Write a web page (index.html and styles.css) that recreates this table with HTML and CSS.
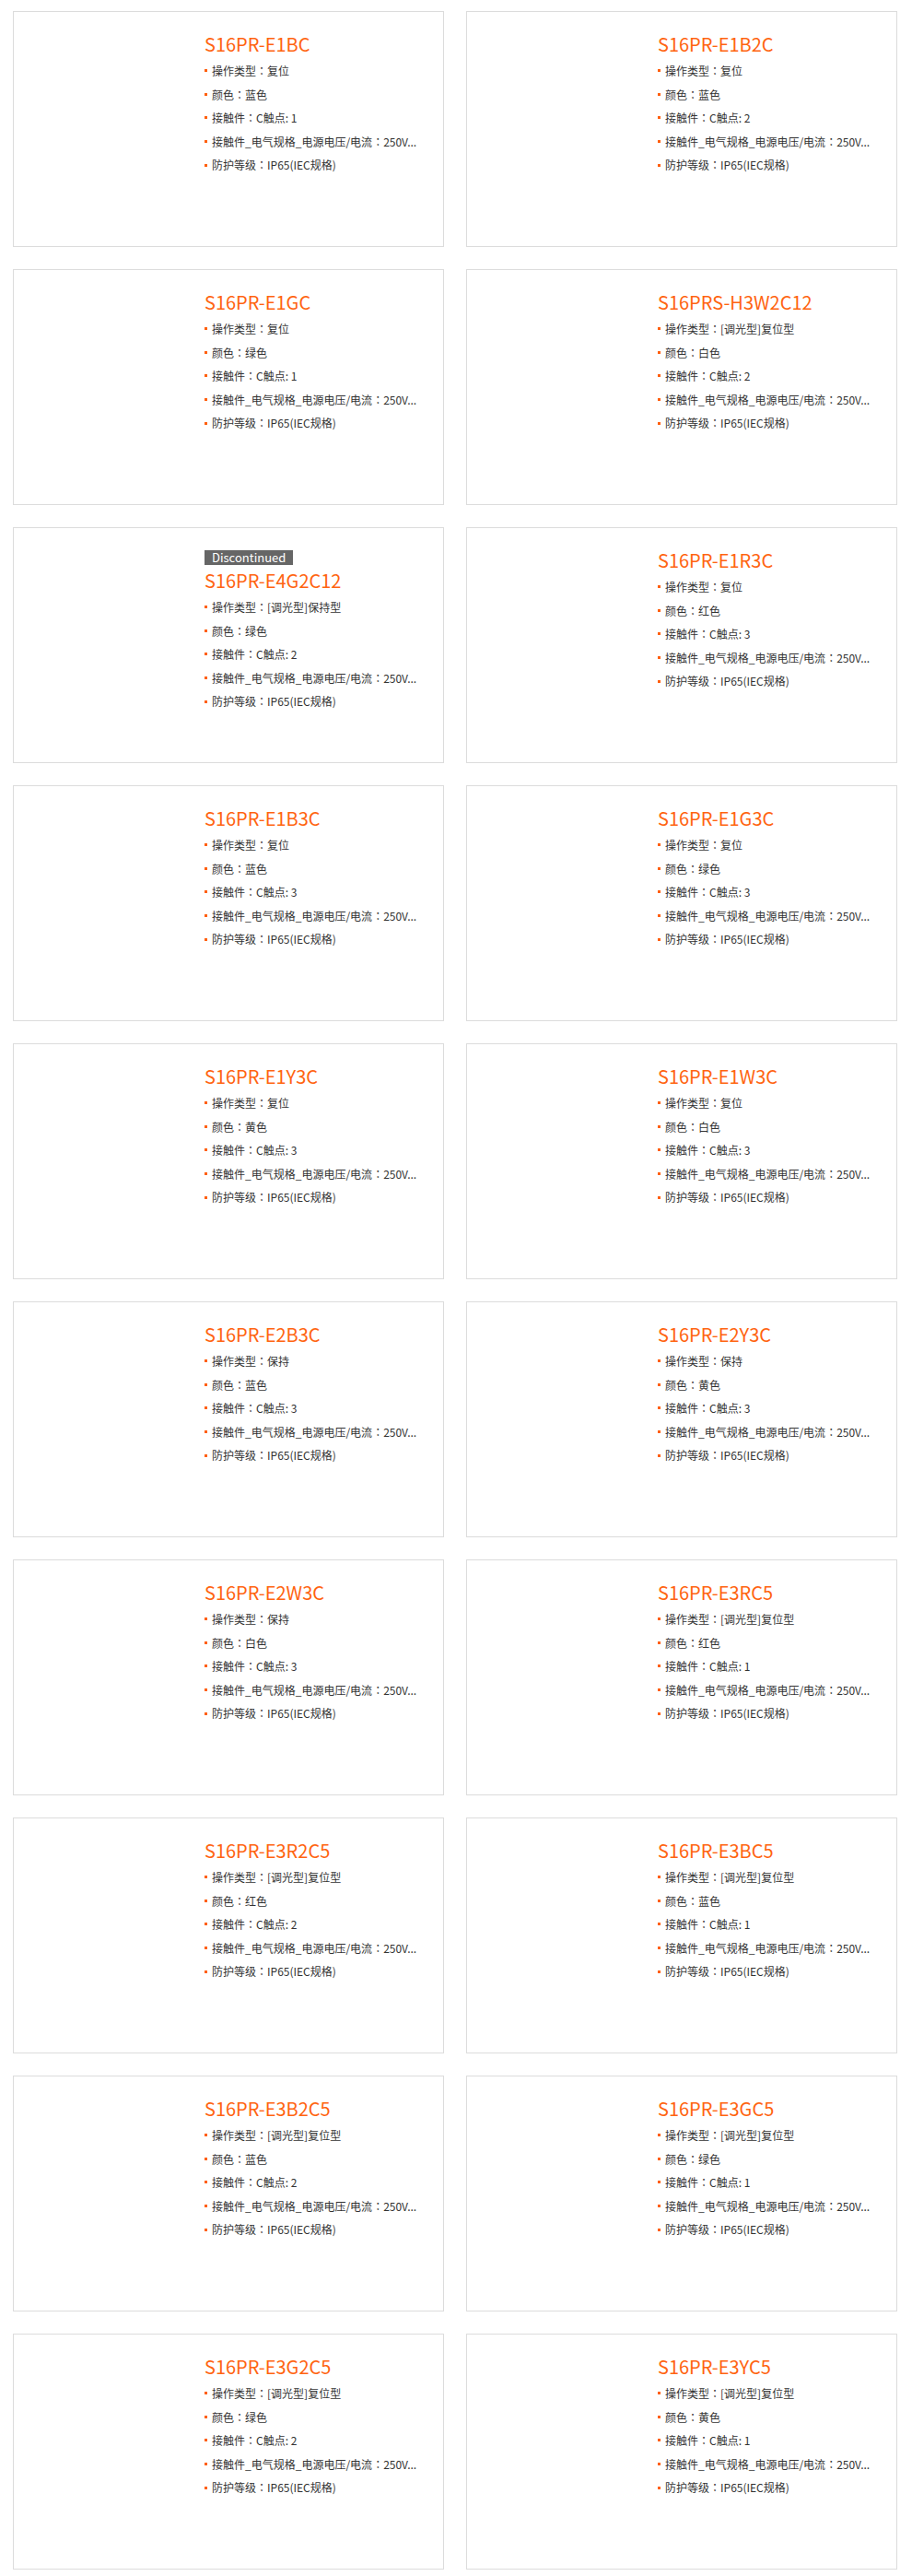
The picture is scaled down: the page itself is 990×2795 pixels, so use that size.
FILE: index.html
```html
<!DOCTYPE html>
<html lang="zh-CN">
<head>
<meta charset="utf-8">
<title>S16 系列</title>
<link rel="stylesheet" href="styles.css">
</head>
<body>
<div class="grid">

  <div class="card">
    <h3 class="title">S16PR-E1BC</h3>
    <ul class="specs">
      <li>操作类型<span class="sep">：</span>复位</li>
      <li>颜色<span class="sep">：</span>蓝色</li>
      <li>接触件<span class="sep">：</span>C触点: 1</li>
      <li>接触件_电气规格_电源电压/电流<span class="sep">：</span>250V...</li>
      <li>防护等级<span class="sep">：</span>IP65(IEC规格)</li>
    </ul>
  </div>
  <div class="card">
    <h3 class="title">S16PR-E1B2C</h3>
    <ul class="specs">
      <li>操作类型<span class="sep">：</span>复位</li>
      <li>颜色<span class="sep">：</span>蓝色</li>
      <li>接触件<span class="sep">：</span>C触点: 2</li>
      <li>接触件_电气规格_电源电压/电流<span class="sep">：</span>250V...</li>
      <li>防护等级<span class="sep">：</span>IP65(IEC规格)</li>
    </ul>
  </div>

  <div class="card">
    <h3 class="title">S16PR-E1GC</h3>
    <ul class="specs">
      <li>操作类型<span class="sep">：</span>复位</li>
      <li>颜色<span class="sep">：</span>绿色</li>
      <li>接触件<span class="sep">：</span>C触点: 1</li>
      <li>接触件_电气规格_电源电压/电流<span class="sep">：</span>250V...</li>
      <li>防护等级<span class="sep">：</span>IP65(IEC规格)</li>
    </ul>
  </div>
  <div class="card">
    <h3 class="title">S16PRS-H3W2C12</h3>
    <ul class="specs">
      <li>操作类型<span class="sep">：</span>[调光型]复位型</li>
      <li>颜色<span class="sep">：</span>白色</li>
      <li>接触件<span class="sep">：</span>C触点: 2</li>
      <li>接触件_电气规格_电源电压/电流<span class="sep">：</span>250V...</li>
      <li>防护等级<span class="sep">：</span>IP65(IEC规格)</li>
    </ul>
  </div>

  <div class="card">
    <span class="badge">Discontinued</span>
    <h3 class="title">S16PR-E4G2C12</h3>
    <ul class="specs">
      <li>操作类型<span class="sep">：</span>[调光型]保持型</li>
      <li>颜色<span class="sep">：</span>绿色</li>
      <li>接触件<span class="sep">：</span>C触点: 2</li>
      <li>接触件_电气规格_电源电压/电流<span class="sep">：</span>250V...</li>
      <li>防护等级<span class="sep">：</span>IP65(IEC规格)</li>
    </ul>
  </div>
  <div class="card">
    <h3 class="title">S16PR-E1R3C</h3>
    <ul class="specs">
      <li>操作类型<span class="sep">：</span>复位</li>
      <li>颜色<span class="sep">：</span>红色</li>
      <li>接触件<span class="sep">：</span>C触点: 3</li>
      <li>接触件_电气规格_电源电压/电流<span class="sep">：</span>250V...</li>
      <li>防护等级<span class="sep">：</span>IP65(IEC规格)</li>
    </ul>
  </div>

  <div class="card">
    <h3 class="title">S16PR-E1B3C</h3>
    <ul class="specs">
      <li>操作类型<span class="sep">：</span>复位</li>
      <li>颜色<span class="sep">：</span>蓝色</li>
      <li>接触件<span class="sep">：</span>C触点: 3</li>
      <li>接触件_电气规格_电源电压/电流<span class="sep">：</span>250V...</li>
      <li>防护等级<span class="sep">：</span>IP65(IEC规格)</li>
    </ul>
  </div>
  <div class="card">
    <h3 class="title">S16PR-E1G3C</h3>
    <ul class="specs">
      <li>操作类型<span class="sep">：</span>复位</li>
      <li>颜色<span class="sep">：</span>绿色</li>
      <li>接触件<span class="sep">：</span>C触点: 3</li>
      <li>接触件_电气规格_电源电压/电流<span class="sep">：</span>250V...</li>
      <li>防护等级<span class="sep">：</span>IP65(IEC规格)</li>
    </ul>
  </div>

  <div class="card">
    <h3 class="title">S16PR-E1Y3C</h3>
    <ul class="specs">
      <li>操作类型<span class="sep">：</span>复位</li>
      <li>颜色<span class="sep">：</span>黄色</li>
      <li>接触件<span class="sep">：</span>C触点: 3</li>
      <li>接触件_电气规格_电源电压/电流<span class="sep">：</span>250V...</li>
      <li>防护等级<span class="sep">：</span>IP65(IEC规格)</li>
    </ul>
  </div>
  <div class="card">
    <h3 class="title">S16PR-E1W3C</h3>
    <ul class="specs">
      <li>操作类型<span class="sep">：</span>复位</li>
      <li>颜色<span class="sep">：</span>白色</li>
      <li>接触件<span class="sep">：</span>C触点: 3</li>
      <li>接触件_电气规格_电源电压/电流<span class="sep">：</span>250V...</li>
      <li>防护等级<span class="sep">：</span>IP65(IEC规格)</li>
    </ul>
  </div>

  <div class="card">
    <h3 class="title">S16PR-E2B3C</h3>
    <ul class="specs">
      <li>操作类型<span class="sep">：</span>保持</li>
      <li>颜色<span class="sep">：</span>蓝色</li>
      <li>接触件<span class="sep">：</span>C触点: 3</li>
      <li>接触件_电气规格_电源电压/电流<span class="sep">：</span>250V...</li>
      <li>防护等级<span class="sep">：</span>IP65(IEC规格)</li>
    </ul>
  </div>
  <div class="card">
    <h3 class="title">S16PR-E2Y3C</h3>
    <ul class="specs">
      <li>操作类型<span class="sep">：</span>保持</li>
      <li>颜色<span class="sep">：</span>黄色</li>
      <li>接触件<span class="sep">：</span>C触点: 3</li>
      <li>接触件_电气规格_电源电压/电流<span class="sep">：</span>250V...</li>
      <li>防护等级<span class="sep">：</span>IP65(IEC规格)</li>
    </ul>
  </div>

  <div class="card">
    <h3 class="title">S16PR-E2W3C</h3>
    <ul class="specs">
      <li>操作类型<span class="sep">：</span>保持</li>
      <li>颜色<span class="sep">：</span>白色</li>
      <li>接触件<span class="sep">：</span>C触点: 3</li>
      <li>接触件_电气规格_电源电压/电流<span class="sep">：</span>250V...</li>
      <li>防护等级<span class="sep">：</span>IP65(IEC规格)</li>
    </ul>
  </div>
  <div class="card">
    <h3 class="title">S16PR-E3RC5</h3>
    <ul class="specs">
      <li>操作类型<span class="sep">：</span>[调光型]复位型</li>
      <li>颜色<span class="sep">：</span>红色</li>
      <li>接触件<span class="sep">：</span>C触点: 1</li>
      <li>接触件_电气规格_电源电压/电流<span class="sep">：</span>250V...</li>
      <li>防护等级<span class="sep">：</span>IP65(IEC规格)</li>
    </ul>
  </div>

  <div class="card">
    <h3 class="title">S16PR-E3R2C5</h3>
    <ul class="specs">
      <li>操作类型<span class="sep">：</span>[调光型]复位型</li>
      <li>颜色<span class="sep">：</span>红色</li>
      <li>接触件<span class="sep">：</span>C触点: 2</li>
      <li>接触件_电气规格_电源电压/电流<span class="sep">：</span>250V...</li>
      <li>防护等级<span class="sep">：</span>IP65(IEC规格)</li>
    </ul>
  </div>
  <div class="card">
    <h3 class="title">S16PR-E3BC5</h3>
    <ul class="specs">
      <li>操作类型<span class="sep">：</span>[调光型]复位型</li>
      <li>颜色<span class="sep">：</span>蓝色</li>
      <li>接触件<span class="sep">：</span>C触点: 1</li>
      <li>接触件_电气规格_电源电压/电流<span class="sep">：</span>250V...</li>
      <li>防护等级<span class="sep">：</span>IP65(IEC规格)</li>
    </ul>
  </div>

  <div class="card">
    <h3 class="title">S16PR-E3B2C5</h3>
    <ul class="specs">
      <li>操作类型<span class="sep">：</span>[调光型]复位型</li>
      <li>颜色<span class="sep">：</span>蓝色</li>
      <li>接触件<span class="sep">：</span>C触点: 2</li>
      <li>接触件_电气规格_电源电压/电流<span class="sep">：</span>250V...</li>
      <li>防护等级<span class="sep">：</span>IP65(IEC规格)</li>
    </ul>
  </div>
  <div class="card">
    <h3 class="title">S16PR-E3GC5</h3>
    <ul class="specs">
      <li>操作类型<span class="sep">：</span>[调光型]复位型</li>
      <li>颜色<span class="sep">：</span>绿色</li>
      <li>接触件<span class="sep">：</span>C触点: 1</li>
      <li>接触件_电气规格_电源电压/电流<span class="sep">：</span>250V...</li>
      <li>防护等级<span class="sep">：</span>IP65(IEC规格)</li>
    </ul>
  </div>

  <div class="card">
    <h3 class="title">S16PR-E3G2C5</h3>
    <ul class="specs">
      <li>操作类型<span class="sep">：</span>[调光型]复位型</li>
      <li>颜色<span class="sep">：</span>绿色</li>
      <li>接触件<span class="sep">：</span>C触点: 2</li>
      <li>接触件_电气规格_电源电压/电流<span class="sep">：</span>250V...</li>
      <li>防护等级<span class="sep">：</span>IP65(IEC规格)</li>
    </ul>
  </div>
  <div class="card">
    <h3 class="title">S16PR-E3YC5</h3>
    <ul class="specs">
      <li>操作类型<span class="sep">：</span>[调光型]复位型</li>
      <li>颜色<span class="sep">：</span>黄色</li>
      <li>接触件<span class="sep">：</span>C触点: 1</li>
      <li>接触件_电气规格_电源电压/电流<span class="sep">：</span>250V...</li>
      <li>防护等级<span class="sep">：</span>IP65(IEC规格)</li>
    </ul>
  </div>

</div>
</body>
</html>
```

FILE: styles.css
```css
html, body {
  margin: 0;
  padding: 0;
  background: #fff;
}

body {
  font-family: "Noto Sans CJK SC", "Noto Sans", sans-serif;
  color: #333;
}

.grid {
  display: grid;
  grid-template-columns: 468px 468px;
  column-gap: 24px;
  row-gap: 24px;
  padding: 12px 0 8px 14px;
}

.card {
  box-sizing: border-box;
  height: 256px;
  border: 1px solid #dcdcdc;
  padding: 19px 0 0 207px;
  display: flex;
  flex-direction: column;
  align-items: flex-start;
}

.badge {
  display: block;
  margin: 5px 0 1px;
  height: 16px;
  line-height: 16px;
  padding: 0 8px;
  background: #666;
  color: #fff;
  font-size: 13px;
}

.title {
  margin: 0;
  font-size: 20px;
  font-weight: 400;
  line-height: 32px;
  color: #ff6410;
}

.specs {
  list-style: none;
  margin: 0;
  padding: 0;
}

.specs li {
  display: flex;
  align-items: center;
  font-size: 12px;
  line-height: 25.6px;
  color: #333;
  white-space: pre;
}

.specs li::before {
  content: "";
  width: 3px;
  height: 3px;
  margin-right: 5px;
  background: #ff6010;
  flex: none;
}

.specs .sep {
  font-family: "Noto Sans CJK TC", "Noto Sans CJK SC", sans-serif;
}
```
